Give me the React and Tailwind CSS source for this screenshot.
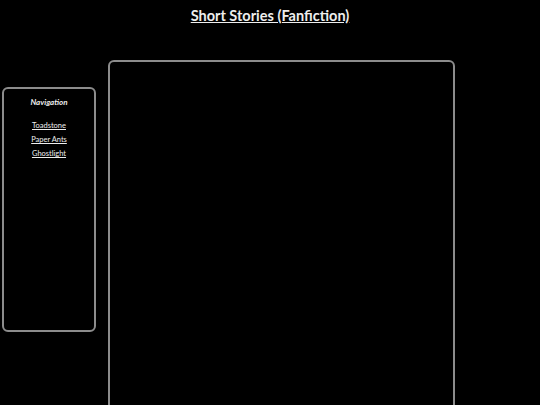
export default function App() {
  const links = ["Toadstone", "Paper Ants", "Ghostlight"];
  return (
    <div className="h-[405px] overflow-hidden bg-black text-[#eeeeee] font-['Lato','Open_Sans',sans-serif]">
      <h1 className="pt-[6px] text-center text-[14.5px] font-bold leading-[20px]">
        <a href="#" className="underline">Short Stories (Fanfiction)</a>
      </h1>
      <div className="mt-[34px] flex items-start">
        <nav className="ml-[2px] mt-[27px] h-[245px] w-[94px] rounded-[6px] border-2 border-[#8c8c8c] pt-[8px] text-center">
          <h2 className="text-[8px] font-bold italic leading-[10px]">Navigation</h2>
          <ul className="mt-[14px] flex flex-col gap-[4px] text-[7.5px] leading-[10px]">
            {links.map((l) => (
              <li key={l}>
                <a href="#" className="underline">{l}</a>
              </li>
            ))}
          </ul>
        </nav>
        <main className="ml-[12px] h-[400px] w-[347px] rounded-[6px] border-2 border-[#8c8c8c]" />
      </div>
    </div>
  );
}
